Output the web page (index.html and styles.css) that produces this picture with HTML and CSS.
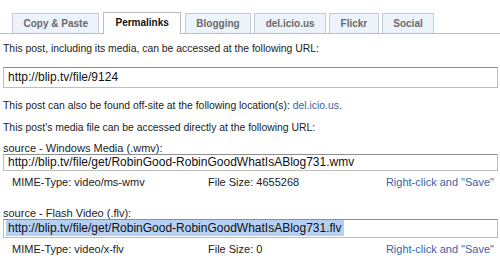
FILE: index.html
```html
<!DOCTYPE html>
<html>
<head>
<meta charset="utf-8">
<link rel="stylesheet" href="styles.css">
</head>
<body>
<div class="page">
  <div class="tabs">
    <div class="tab">Copy &amp; Paste</div>
    <div class="tab active">Permalinks</div>
    <div class="tab">Blogging</div>
    <div class="tab">del.icio.us</div>
    <div class="tab">Flickr</div>
    <div class="tab">Social</div>
  </div>
  <p class="note first">This post, including its media, can be accessed at the following URL:</p>
  <div class="field big">http://blip.tv/file/9124</div>
  <p class="note n2">This post can also be found off-site at the following location(s): <a class="link">del.icio.us</a>.</p>
  <p class="note n3">This post's media file can be accessed directly at the following URL:</p>
  <div class="source s1">source - Windows Media (.wmv):</div>
  <div class="field small">http://blip.tv/file/get/RobinGood-RobinGoodWhatIsABlog731.wmv</div>
  <div class="meta">
    <span>MIME-Type: video/ms-wmv</span>
    <span>File Size: 4655268</span>
    <a class="link save">Right-click and "Save"</a>
  </div>
  <div class="source s2">source - Flash Video (.flv):</div>
  <div class="field small sel-field"><span class="sel">http://blip.tv/file/get/RobinGood-RobinGoodWhatIsABlog731.flv</span></div>
  <div class="meta m2">
    <span>MIME-Type: video/x-flv</span>
    <span>File Size: 0</span>
    <a class="link save">Right-click and "Save"</a>
  </div>
</div>
</body>
</html>
```

FILE: styles.css
```css
html, body {
  margin: 0;
  padding: 0;
  background: #ffffff;
}
body {
  font-family: "Liberation Sans", Arial, sans-serif;
  color: #222;
}
.page {
  padding: 0 2px 0 3px;
}
.tabs {
  display: flex;
  align-items: flex-end;
  gap: 3px;
  padding: 13px 0 0 12px;
  border-bottom: 1px solid #b9bfc7;
  height: 20px;
  margin: 0 -2px 0 -3px;
}
.tab {
  height: 19px;
  line-height: 19px;
  padding: 0 10.5px;
  border: 1px solid #c4ccd8;
  border-bottom: none;
  background: #edf3fb;
  color: #6a6a6a;
  font-size: 10px;
  font-weight: bold;
  white-space: nowrap;
}
.tab.active {
  background: #ffffff;
  color: #111;
  height: 21px;
  line-height: 20px;
  margin: 0 1px -1px;
  padding: 0 11px;
  border-color: #bcbcbc;
}
.note {
  margin: 0;
  font-size: 10.4px;
  line-height: 14px;
  color: #222;
}
.note.first { margin-top: 8px; }
.note.n2 { margin-top: 11px; }
.note.n3 { margin-top: 8px; }
.link {
  color: #3b62a6;
  text-decoration: none;
}
.field {
  border: 1px solid #bdbdbd;
  border-top-color: #8f8f8f;
  color: #111;
  white-space: nowrap;
  overflow: hidden;
}
.field.big {
  margin-top: 11px;
  height: 19px;
  line-height: 19px;
  font-size: 12px;
  padding: 0 4px;
}
.field.small {
  height: 15px;
  line-height: 15px;
  font-size: 12px;
  padding: 0 4px;
}
.sel-field {
  padding: 0 2px !important;
  height: 17px !important;
  line-height: 17px !important;
}
.sel {
  background: #b6d0f3;
  padding: 1px 2px;
}
.source {
  font-size: 11px;
  line-height: 12px;
  color: #222;
}
.source.s1 { margin-top: 7px; }
.source.s2 { margin-top: 19px; }
.meta {
  display: grid;
  grid-template-columns: 196px 1fr auto;
  padding: 0 4px 0 9px;
  margin-top: 5px;
  font-size: 11px;
  line-height: 12px;
  color: #222;
}
.meta.m2 { margin-top: 5px; }
```
